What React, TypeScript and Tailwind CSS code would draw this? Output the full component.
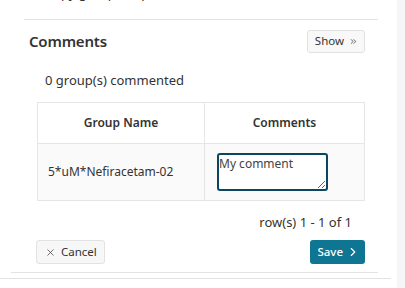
import { X, ChevronRight, ChevronsRight } from "lucide-react";

const rows = [{ group: "5*uM*Nefiracetam-02", comment: "My comment" }];

export default function App() {
  return (
    <div className="relative w-[405px] h-[288px] overflow-hidden bg-white text-[#333] font-['Noto_Sans','Open_Sans',sans-serif]">
      {/* right edge strip */}
      <div className="absolute right-0 top-0 h-full w-[8px] bg-[#f6f6f6]" />

      {/* previous section, cut off above */}
      <div className="-mt-[17px] pl-[45px] text-[13px] leading-[20px] text-[#333]">
        Copy groups to parent
      </div>

      <div className="ml-[24px] mr-[27px] mt-[16px] border-t border-[#e3e3e3]">
        <div className="flex items-center justify-between pl-[5px] pr-[13px] pt-[9px]">
          <h2 className="text-[15px] font-semibold leading-[24px] tracking-[-0.2px]">Comments</h2>
          <button className="flex items-center gap-[5px] h-[23px] pl-[7px] pr-[6px] rounded-[3px] border border-[#e2e2e2] bg-[#f8f8f8] text-[11.5px] text-[#333]">
            Show <ChevronsRight className="w-[9px] h-[9px]" strokeWidth={2} />
          </button>
        </div>

        <p className="mt-[17px] pl-[21px] text-[13px] leading-[20px]">0 group(s) commented</p>

        <table className="mt-[12px] ml-[13px] w-[328px] border-collapse">
          <thead>
            <tr className="h-[41px]">
              <th className="w-[167px] border border-[#e6e6e6] text-[12px] font-semibold">Group Name</th>
              <th className="border border-[#e6e6e6] text-[12px] font-semibold">Comments</th>
            </tr>
          </thead>
          <tbody>
            {rows.map((r) => (
              <tr key={r.group} className="h-[57px] bg-[#fafafa]">
                <td className="border border-[#e6e6e6] pl-[10px] text-left text-[12px]">{r.group}</td>
                <td className="border border-[#e6e6e6] pl-[12px]">
                  <textarea
                    defaultValue={r.comment}
                    className="block w-[111px] h-[38px] rounded-[3px] border-2 border-[#0b4660] bg-white px-0 py-0 text-[12px] leading-[18px] text-[#444] outline-none"
                  />
                </td>
              </tr>
            ))}
          </tbody>
        </table>

        <div className="mt-[11px] pr-[26px] text-right text-[13px] leading-[20px]">row(s) 1 - 1 of 1</div>

        <div className="mt-[8px] flex items-center justify-between pl-[12px] pr-[13px]">
          <button className="flex items-center gap-[5px] h-[24px] pl-[8px] pr-[7px] rounded-[3px] border border-[#e2e2e2] bg-[#f7f7f7] text-[11.5px] text-[#333]">
            <X className="w-[11px] h-[11px]" strokeWidth={1.5} />
            Cancel
          </button>
          <button className="flex items-center gap-[3px] h-[24px] pl-[7px] pr-[5px] rounded-[3px] bg-[#0e7592] text-[11.5px] font-medium text-white">
            Save
            <ChevronRight className="w-[14px] h-[14px]" strokeWidth={2} />
          </button>
        </div>
      </div>

      <div className="ml-[11px] mr-[27px] mt-[8px] border-t border-[#e3e3e3]" />
      <div className="mr-[14px] mt-[5px] border-t border-[#e3e3e3]" />
    </div>
  );
}
